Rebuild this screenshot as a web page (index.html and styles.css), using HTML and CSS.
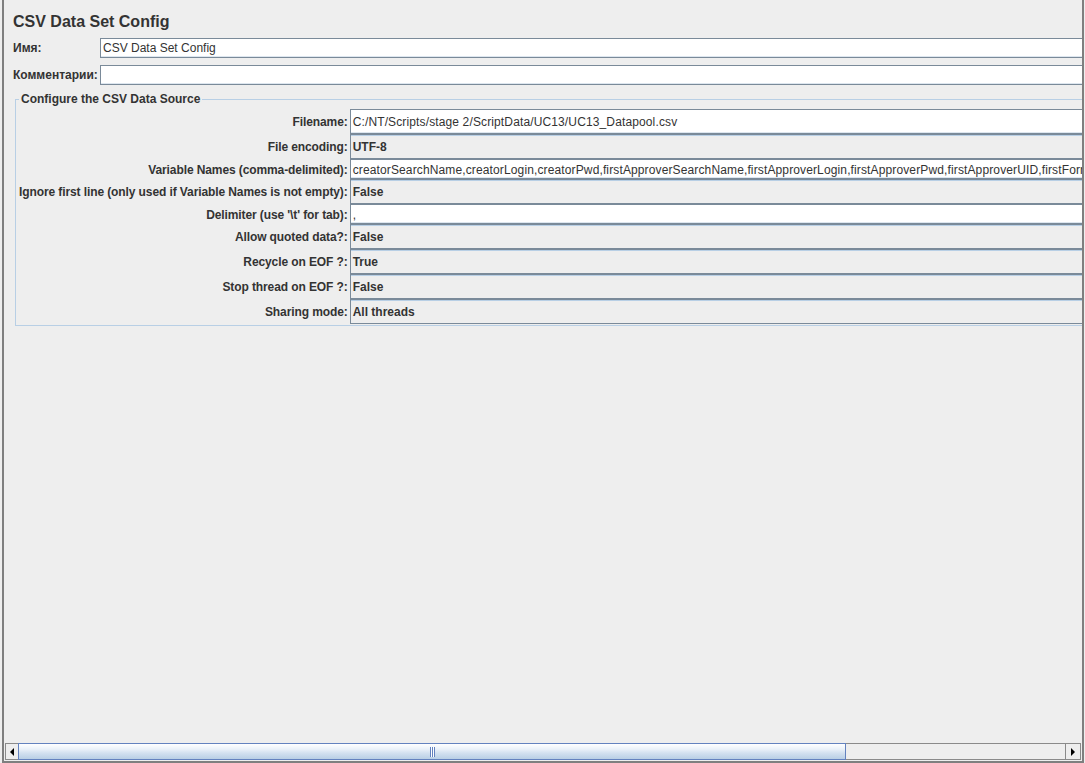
FILE: index.html
```html
<!DOCTYPE html>
<html>
<head>
<meta charset="utf-8">
<link rel="stylesheet" href="styles.css">
</head>
<body>
<div class="frame">
	<div class="content">
		<h1 class="title">CSV Data Set Config</h1>
		<div class="meta">
			<span class="metaLabel">Имя:</span>
			<div class="field text">CSV Data Set Config</div>
			<span class="metaLabel">Комментарии:</span>
			<div class="field text"></div>
		</div>
		<fieldset class="group">
			<legend>Configure the CSV Data Source</legend>
			<div class="form">
				<span class="lbl">Filename:</span>
				<div class="field text tall">C:/NT/Scripts/stage 2/ScriptData/UC13/UC13_Datapool.csv</div>
				<span class="lbl">File encoding:</span>
				<div class="field combo">UTF-8</div>
				<span class="lbl">Variable Names (comma-delimited):</span>
				<div class="field text">creatorSearchName,creatorLogin,creatorPwd,firstApproverSearchName,firstApproverLogin,firstApproverPwd,firstApproverUID,firstFormName,firstFormLogin</div>
				<span class="lbl">Ignore first line (only used if Variable Names is not empty):</span>
				<div class="field combo">False</div>
				<span class="lbl">Delimiter (use '\t' for tab):</span>
				<div class="field text">,</div>
				<span class="lbl">Allow quoted data?:</span>
				<div class="field combo">False</div>
				<span class="lbl">Recycle on EOF ?:</span>
				<div class="field combo">True</div>
				<span class="lbl">Stop thread on EOF ?:</span>
				<div class="field combo">False</div>
				<span class="lbl">Sharing mode:</span>
				<div class="field combo">All threads</div>
			</div>
		</fieldset>
	</div>
	<div class="hscroll">
		<div class="arrowBtn left"><span class="arrowLeft"></span></div>
		<div class="track">
			<div class="thumb"><span class="grip"></span></div>
		</div>
		<div class="arrowBtn right"><span class="arrowRight"></span></div>
	</div>
</div>
</body>
</html>
```
FILE: styles.css
```css
body {
	margin: 0px;
	background-color: #eeeeee;
	font-family: "Liberation Sans", Arial, sans-serif;
	font-size: 12px;
	color: #333333;
}

div.frame {
	box-sizing: border-box;
	width: 1082px;
	height: 763px;
	margin-left: 2px;
	border-left: 2px solid #7f7f7f;
	border-right: 2px solid #7f7f7f;
	border-bottom: 2px solid #7f7f7f;
	display: flex;
	flex-direction: column;
}

div.content {
	flex: 1;
	overflow: hidden;
	padding: 12px 0px 0px 9px;
}

h1.title {
	margin: 0px;
	font-size: 16px;
	line-height: 20px;
	font-weight: bold;
}

div.meta {
	display: grid;
	grid-template-columns: 87px 1fr;
	row-gap: 7px;
	margin-top: 6px;
	align-items: center;
}

.metaLabel, .lbl {
	font-weight: bold;
	white-space: nowrap;
}

.lbl {
	text-align: right;
	letter-spacing: -0.1px;
	padding-top: 1px;
}

.field {
	box-sizing: border-box;
	height: 20px;
	line-height: 19px;
	border: 1px solid #7a8a99;
	border-right: none;
	padding-left: 2px;
	white-space: nowrap;
	overflow: hidden;
}

.field.text {
	background-color: #ffffff;
	box-shadow: inset 0 -1px 0 #dde6ef;
}

.form .field.text {
	line-height: 20px;
	letter-spacing: 0.13px;
}

.field.tall {
	height: 25px;
	line-height: 24px;
}

.form .field.tall {
	line-height: 24px;
}

.field.combo {
	height: 25px;
	line-height: 24px;
	background-color: #eeeeee;
	font-weight: bold;
	box-shadow: inset 0 1px 0 #b8cfe5;
}

fieldset.group {
	margin: 7px -12px 0px 2px;
	padding: 0px 0px 1px 3px;
	border: 1px solid #b8cfe5;
	min-width: 0;
}

fieldset.group legend {
	padding: 0px 2px;
	margin-left: 0px;
	font-weight: bold;
	line-height: 14px;
}

div.form {
	display: grid;
	grid-template-columns: max-content 1fr;
	column-gap: 2px;
	align-items: center;
	margin-top: 3px;
}

div.hscroll {
	height: 17px;
	margin: 0px 1px 1px 1px;
	display: flex;
}

.arrowBtn {
	box-sizing: border-box;
	height: 17px;
	border: 1px solid #8a8a8a;
	background-color: #eeeeee;
	display: flex;
	align-items: center;
	justify-content: center;
}

.arrowBtn.left {
	width: 13px;
	border-right: none;
}

.arrowBtn.right {
	width: 16px;
}

.arrowLeft {
	width: 0;
	height: 0;
	border-top: 4px solid transparent;
	border-bottom: 4px solid transparent;
	border-right: 4px solid #000000;
}

.arrowRight {
	width: 0;
	height: 0;
	border-top: 4px solid transparent;
	border-bottom: 4px solid transparent;
	border-left: 4px solid #000000;
}

div.track {
	flex: 1;
	box-sizing: border-box;
	height: 17px;
	border-top: 1px solid #8a8a8a;
	border-bottom: 1px solid #8a8a8a;
	background-color: #eeeeee;
	display: flex;
}

div.thumb {
	box-sizing: border-box;
	width: 828px;
	height: 17px;
	margin-top: -1px;
	border: 1px solid #6382bf;
	background: linear-gradient(#ffffff 0%, #eaf1f9 35%, #d3e1f0 60%, #b8cfe5 100%);
	display: flex;
	align-items: center;
	justify-content: center;
}

span.grip {
	width: 5px;
	height: 10px;
	background: linear-gradient(90deg, #6382bf 0 1px, #ffffff 1px 2px, #6382bf 2px 3px, #ffffff 3px 4px, #6382bf 4px 5px);
}
```
